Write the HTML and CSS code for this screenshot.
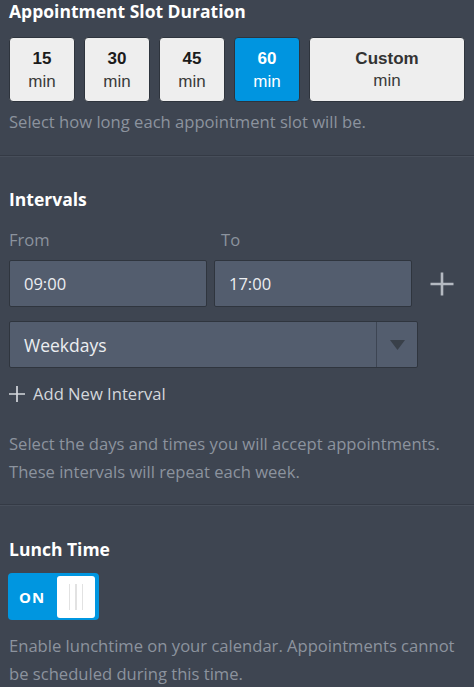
FILE: index.html
```html
<!DOCTYPE html>
<html lang="en">
<head>
<meta charset="utf-8">
<title>Appointment settings</title>
<link rel="stylesheet" href="styles.css">
</head>
<body>
<div class="panel">
  <section class="section first">
    <h2 class="title">Appointment Slot Duration</h2>
    <div class="durations">
      <button class="dur"><b>15</b><span>min</span></button>
      <button class="dur"><b>30</b><span>min</span></button>
      <button class="dur"><b>45</b><span>min</span></button>
      <button class="dur active"><b>60</b><span>min</span></button>
      <button class="dur custom"><b>Custom</b><span>min</span></button>
    </div>
    <p class="hint">Select how long each appointment slot will be.</p>
  </section>

  <section class="section intervals">
    <h2 class="title">Intervals</h2>
    <div class="labels">
      <span class="label">From</span>
      <span class="label">To</span>
    </div>
    <div class="time-row">
      <div class="field">09:00</div>
      <div class="field">17:00</div>
      <svg class="plus" width="24" height="24" viewBox="0 0 24 24"><path d="M12 0.5v23M0.5 12h23" stroke="#b4b9c1" stroke-width="2.6" fill="none"/></svg>
    </div>
    <div class="select">
      <span class="select-text">Weekdays</span>
      <span class="select-arrow"><svg width="15" height="10" viewBox="0 0 15 10"><path d="M0 0h15L7.5 10z" fill="#394049"/></svg></span>
    </div>
    <div class="add">
      <svg width="16" height="16" viewBox="0 0 16 16"><path d="M8 0v16M0 8h16" stroke="#d4d7dc" stroke-width="1.7" fill="none"/></svg>
      <span>Add New Interval</span>
    </div>
    <p class="hint">Select the days and times you will accept appointments. These intervals will repeat each week.</p>
  </section>

  <section class="section lunch">
    <h2 class="title">Lunch Time</h2>
    <div class="toggle">
      <span class="toggle-label">ON</span>
      <span class="knob"><i></i><i></i><i></i></span>
    </div>
    <p class="hint">Enable lunchtime on your calendar. Appointments cannot be scheduled during this time.</p>
  </section>
</div>
</body>
</html>
```

FILE: styles.css
```css
html, body {
  margin: 0;
  padding: 0;
}
body {
  background: #3e4551;
  font-family: "Open Sans", "Noto Sans", sans-serif;
  color: #fff;
  width: 474px;
  height: 687px;
  overflow: hidden;
}
.section {
  padding: 0 9px;
}
.section.first {
  padding-bottom: 19px;
  border-bottom: 1px solid #343a45;
  box-shadow: 0 1px 0 #474e5a;
}
.title {
  margin: 0;
  font-size: 17.5px;
  line-height: 22px;
  font-weight: 700;
  color: #fff;
}
.durations {
  display: flex;
  gap: 9px;
  margin-top: 15px;
}
.dur {
  width: 66px;
  height: 65px;
  box-sizing: border-box;
  border: 1px solid #2e343d;
  border-radius: 4px;
  background: #eeeeee;
  font-family: "Liberation Sans", Arial, sans-serif;
  font-size: 17px;
  display: flex;
  flex-direction: column;
  align-items: center;
  justify-content: center;
  padding: 0;
  line-height: 23px;
}
.dur b {
  font-weight: 700;
  color: #1b1b1b;
}
.dur span {
  color: #3a3a3a;
}
.dur.active {
  background: #0095e0;
}
.dur.active b, .dur.active span {
  color: #fff;
}
.dur.custom {
  width: 156px;
  line-height: 22px;
}
.dur.custom b {
  color: #333;
}
.hint {
  margin: 6px 0 0;
  font-size: 16.6px;
  line-height: 28px;
  color: #8c939e;
}
.intervals {
  padding-top: 32px;
  padding-bottom: 18px;
  border-bottom: 1px solid #343a45;
  box-shadow: 0 1px 0 #474e5a;
}
.labels {
  display: flex;
  margin-top: 18px;
  font-size: 16.6px;
  line-height: 24px;
  color: #8c939e;
}
.label:first-child {
  width: 212px;
}
.time-row {
  display: flex;
  align-items: center;
  gap: 7px;
  margin-top: 8px;
}
.field {
  width: 198px;
  height: 47px;
  box-sizing: border-box;
  background: #535d6e;
  border: 1px solid #2f353e;
  border-radius: 2px;
  padding-left: 14px;
  display: flex;
  align-items: center;
  font-size: 16.5px;
  color: #eceef1;
}
.plus {
  margin-left: 11px;
}
.select {
  margin-top: 14px;
  width: 409px;
  height: 47px;
  box-sizing: border-box;
  background: #535d6e;
  border: 1px solid #2f353e;
  border-radius: 2px;
  display: flex;
  align-items: stretch;
}
.select-text {
  flex: 1;
  padding-left: 14px;
  display: flex;
  align-items: center;
  font-size: 17.5px;
  color: #eceef1;
}
.select-arrow {
  width: 40px;
  border-left: 1px solid #3d4553;
  display: flex;
  align-items: center;
  justify-content: center;
}
.add {
  display: flex;
  align-items: center;
  gap: 8px;
  margin-top: 14px;
  font-size: 16.6px;
  line-height: 24px;
  color: #d4d7dc;
}
.intervals .hint {
  margin-top: 24px;
}
.lunch {
  padding-top: 33px;
}
.toggle {
  margin-top: 13px;
  margin-left: -1px;
  width: 91px;
  height: 47px;
  box-sizing: border-box;
  background: #0096e0;
  border-radius: 4px;
  display: flex;
  align-items: center;
  padding: 3px 4px 2px 11px;
}
.toggle-label {
  flex: 1;
  font-size: 15px;
  font-weight: 700;
  letter-spacing: 1px;
  color: #fff;
}
.knob {
  width: 38px;
  height: 42px;
  background: #fff;
  border-radius: 3px;
  display: flex;
  justify-content: center;
  align-items: center;
  gap: 5px;
}
.knob i {
  width: 1.5px;
  height: 26px;
  background: #e2e2e2;
}
.lunch .hint {
  margin-top: 12px;
}
```
